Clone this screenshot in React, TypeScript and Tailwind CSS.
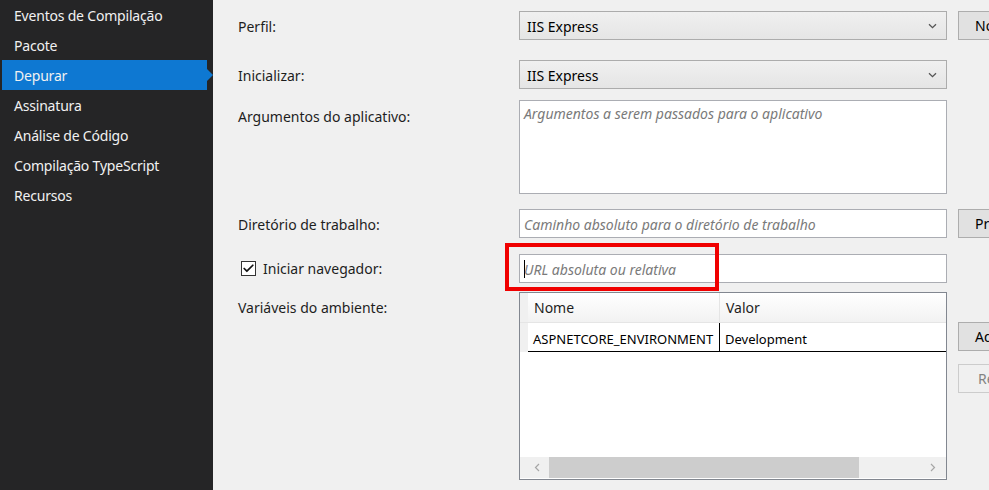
import { Check } from 'lucide-react'

const NAV = ['Eventos de Compilação', 'Pacote', 'Depurar', 'Assinatura', 'Análise de Código', 'Compilação TypeScript', 'Recursos']
const FONT = "font-['Noto_Sans','Open_Sans',sans-serif]"

function Chevron() {
  return (
    <svg width="9" height="6" viewBox="0 0 9 6" className="shrink-0">
      <path d="M1 1.2 L4.5 4.6 L8 1.2" fill="none" stroke="#555" strokeWidth="1.3" />
    </svg>
  )
}

function ScrollArrow({ dir }: { dir: 'left' | 'right' }) {
  return (
    <svg width="6" height="9" viewBox="0 0 6 9" className="shrink-0">
      <path d={dir === 'left' ? 'M5 1 L1.5 4.5 L5 8' : 'M1 1 L4.5 4.5 L1 8'} fill="none" stroke="#a6a6a6" strokeWidth="1.2" />
    </svg>
  )
}

function Combo({ value }: { value: string }) {
  return (
    <div className="w-[428px] h-[29px] flex items-center justify-between pl-[7px] pr-[9px] pt-px border border-[#acacac] bg-gradient-to-b from-[#f0f0f0] to-[#e5e5e5] text-[14px] text-black">
      <span>{value}</span>
      <Chevron />
    </div>
  )
}

function SideButton({ label, disabled }: { label: string; disabled?: boolean }) {
  return (
    <div className={disabled
      ? 'ml-[11px] w-[75px] h-[29px] border border-[#cccccc] bg-[#f0f0f0] text-[#838383] text-[14px] flex items-center pl-[19px]'
      : 'ml-[11px] w-[75px] h-[29px] border border-[#adadad] bg-[#e1e1e1] text-black text-[14px] flex items-center pl-[16px]'}>
      {label}
    </div>
  )
}

function TextBox({ placeholder, caret }: { placeholder: string; caret?: boolean }) {
  return (
    <div className="w-[428px] h-[29px] border border-[#abadb3] bg-white flex items-center pl-[4px] pt-px text-[14px] italic text-[#7a7a7a]">
      {caret && <span className="w-px h-[18px] bg-black mr-[-1px]" />}
      <span>{placeholder}</span>
    </div>
  )
}

export default function App() {
  return (
    <div className={`w-[989px] h-[490px] overflow-hidden flex ${FONT}`}>
      <aside className="w-[213px] shrink-0 bg-[#252526]">
        {NAV.map((item) => (
          <div key={item} className="relative h-[30px] flex items-center">
            {item === 'Depurar' && (
              <>
                <div className="absolute left-[2px] top-0 w-[205px] h-[30px] bg-[#0e78d2]" />
                <div className="absolute left-[207px] top-[9px] w-0 h-0 border-y-[6px] border-y-transparent border-l-[6px] border-l-[#0e78d2]" />
              </>
            )}
            <span className="relative pl-[14px] text-[14px] text-[#f1f1f1] tracking-[-0.2px]">{item}</span>
          </div>
        ))}
      </aside>

      <main className="flex-1 bg-[#f0f0f0] pl-[25px] pt-[11px] text-[14px] text-[#1e1e1e]">
        <div className="flex items-center">
          <label className="w-[281px] pt-px">Perfil:</label>
          <Combo value="IIS Express" />
          <SideButton label="Novo..." />
        </div>

        <div className="flex items-center mt-[20px]">
          <label className="w-[281px] pt-px">Inicializar:</label>
          <Combo value="IIS Express" />
        </div>

        <div className="flex items-start mt-[11px]">
          <label className="w-[281px] pt-[6px]">Argumentos do aplicativo:</label>
          <div className="w-[428px] h-[94px] border border-[#abadb3] bg-white pl-[4px] pt-[2px] italic text-[#7a7a7a]">
            Argumentos a serem passados para o aplicativo
          </div>
        </div>

        <div className="flex items-center mt-[15px]">
          <label className="w-[281px] pt-px">Diretório de trabalho:</label>
          <TextBox placeholder="Caminho absoluto para o diretório de trabalho" />
          <SideButton label="Procurar..." />
        </div>

        <div className="flex items-center mt-[16px]">
          <label className="w-[281px] flex items-center">
            <span className="ml-[3px] w-[15px] h-[15px] border border-[#333] bg-white flex items-center justify-center">
              <Check size={13} strokeWidth={3.2} color="#111" />
            </span>
            <span className="ml-[7px]">Iniciar navegador:</span>
          </label>
          <div className="relative">
            <TextBox placeholder="URL absoluta ou relativa" caret />
            <div className="absolute left-[-14px] top-[-11px] w-[214px] h-[48px] border-[4px] border-[#f00000]" />
          </div>
        </div>

        <div className="flex items-start mt-[9px]">
          <label className="w-[281px] pt-[5px]">Variáveis do ambiente:</label>
          <div className="w-[428px] h-[188px] border border-[#828790] bg-white flex flex-col">
            <div className="flex h-[30px] bg-gradient-to-b from-[#ffffff] to-[#f2f2f2] border-b border-[#e5e5e5]">
              <div className="w-[8px] bg-[#f0f0f0]" />
              <div className="w-[192px] border-r border-[#e5e5e5] pl-[6px] flex items-center">Nome</div>
              <div className="flex-1 pl-[6px] flex items-center">Valor</div>
            </div>
            <div className="flex h-[29px] text-[13px] text-black">
              <div className="w-[8px] bg-[#f0f0f0]" />
              <div className="w-[192px] border-r border-b border-black pl-[5px] pt-[6px] flex items-center whitespace-nowrap">ASPNETCORE_ENVIRONMENT</div>
              <div className="flex-1 border-b border-black pl-[5px] pt-[6px] flex items-center">Development</div>
            </div>
            <div className="flex-1" />
            <div className="h-[21px] bg-[#f0f0f0] flex items-center mb-px">
              <div className="w-[29px] pl-[14px] flex items-center"><ScrollArrow dir="left" /></div>
              <div className="w-[310px] h-[21px] bg-[#cdcdcd]" />
              <div className="flex-1" />
              <div className="pr-[10px] flex items-center"><ScrollArrow dir="right" /></div>
            </div>
          </div>
          <div className="flex flex-col mt-[30px]">
            <SideButton label="Adicionar" />
            <div className="mt-[13px]"><SideButton label="Remover" disabled /></div>
          </div>
        </div>
      </main>
    </div>
  )
}
